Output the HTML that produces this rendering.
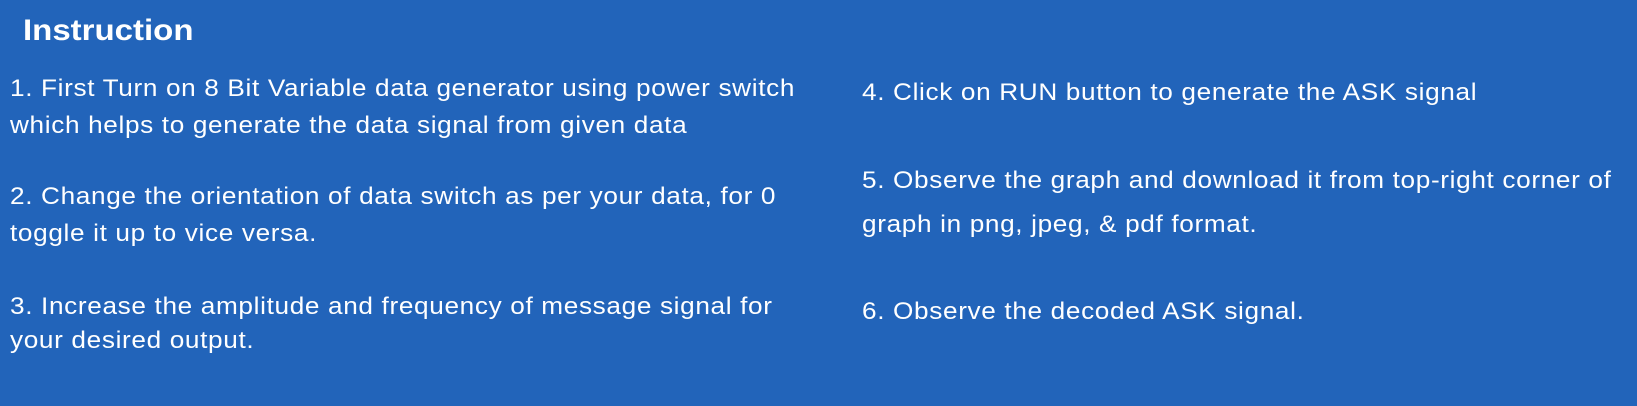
<!DOCTYPE html>
<html><head><meta charset="utf-8"><style>
html,body{margin:0;padding:0;}
body{width:1637px;height:406px;background:#2264ba;position:relative;overflow:hidden;font-family:"Liberation Sans",sans-serif;color:#fff;}
.t{position:absolute;white-space:nowrap;font-size:24px;line-height:24px;letter-spacing:0.6px;transform:scaleX(1.09);transform-origin:0 0;}
.h{position:absolute;left:23px;top:13px;font-size:30px;line-height:36px;font-weight:bold;white-space:nowrap;transform:scaleX(1.1);transform-origin:0 0;}
</style></head><body>
<div class="h">Instruction</div>
<div class="t" style="left:10px;top:77px">1. First Turn on 8 Bit Variable data generator using power switch</div>
<div class="t" style="left:10px;top:114px">which helps to generate the data signal from given data</div>
<div class="t" style="left:10px;top:185px">2. Change the orientation of data switch as per your data, for 0</div>
<div class="t" style="left:10px;top:222px">toggle it up to vice versa.</div>
<div class="t" style="left:10px;top:295px">3. Increase the amplitude and frequency of message signal for</div>
<div class="t" style="left:10px;top:329px">your desired output.</div>
<div class="t" style="left:862px;top:81px">4. Click on RUN button to generate the ASK signal</div>
<div class="t" style="left:862px;top:169px">5. Observe the graph and download it from top-right corner of</div>
<div class="t" style="left:862px;top:213px">graph in png, jpeg, &amp; pdf format.</div>
<div class="t" style="left:862px;top:300px">6. Observe the decoded ASK signal.</div>
</body></html>
